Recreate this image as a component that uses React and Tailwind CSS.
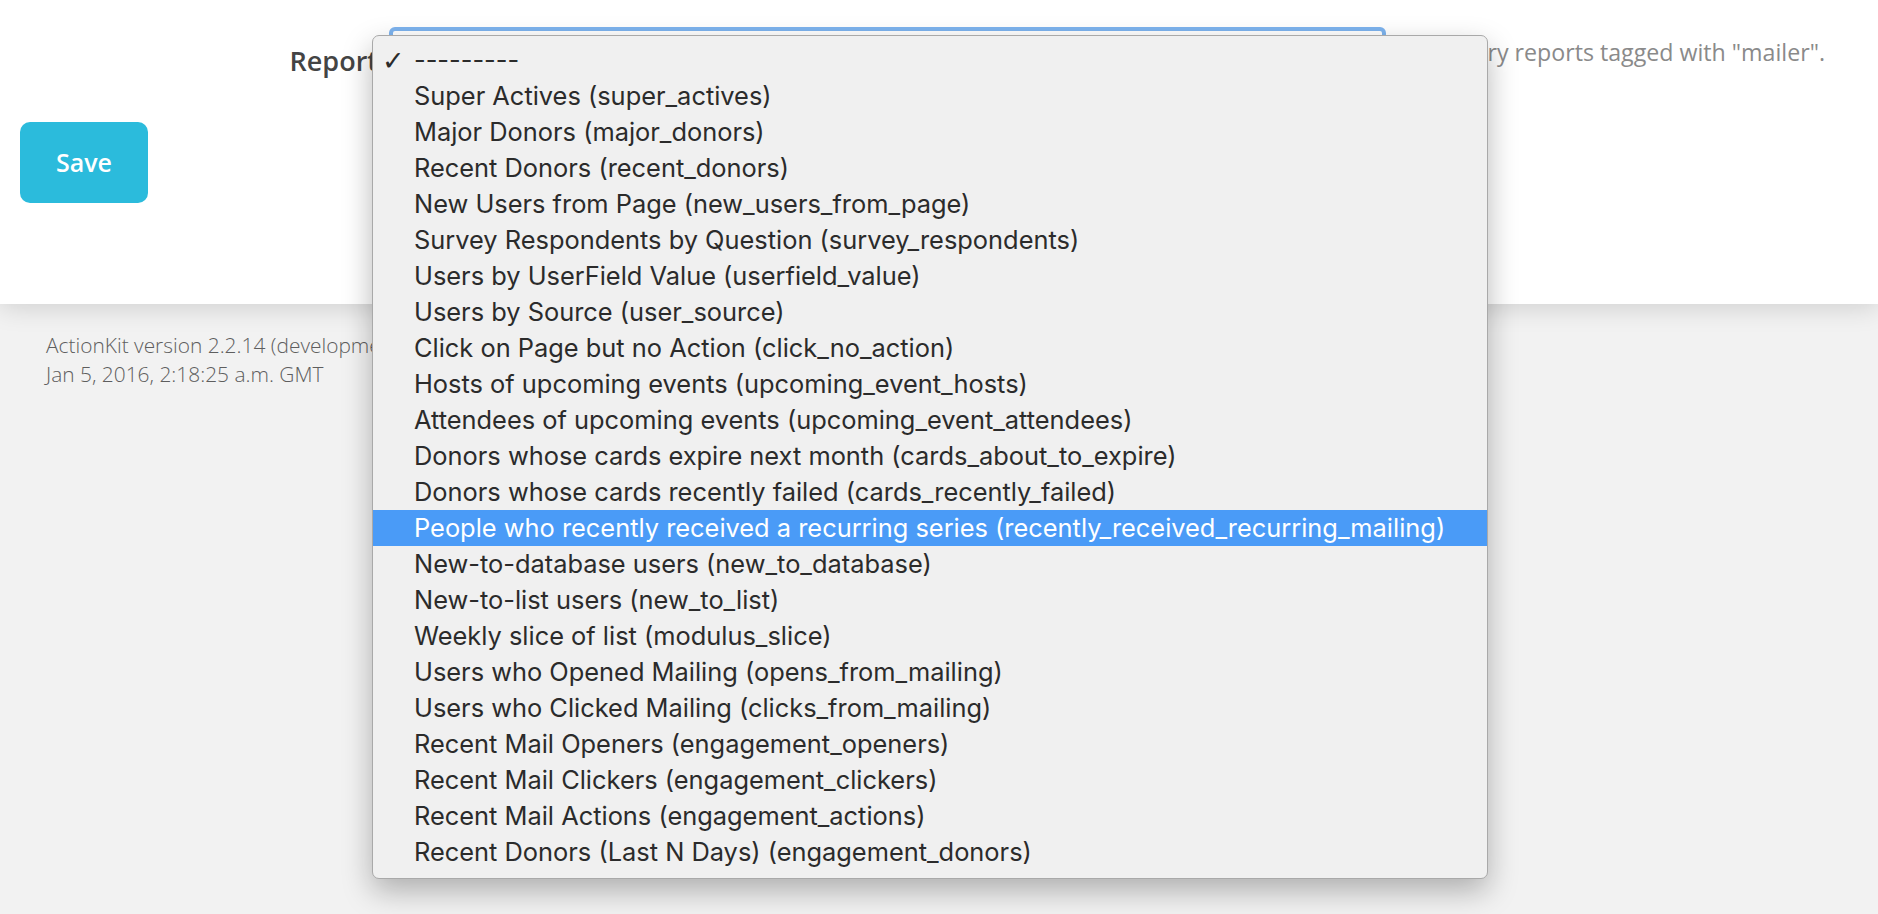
import React from 'react';

const reports = [
  '---------',
  'Super Actives (super_actives)',
  'Major Donors (major_donors)',
  'Recent Donors (recent_donors)',
  'New Users from Page (new_users_from_page)',
  'Survey Respondents by Question (survey_respondents)',
  'Users by UserField Value (userfield_value)',
  'Users by Source (user_source)',
  'Click on Page but no Action (click_no_action)',
  'Hosts of upcoming events (upcoming_event_hosts)',
  'Attendees of upcoming events (upcoming_event_attendees)',
  'Donors whose cards expire next month (cards_about_to_expire)',
  'Donors whose cards recently failed (cards_recently_failed)',
  'People who recently received a recurring series (recently_received_recurring_mailing)',
  'New-to-database users (new_to_database)',
  'New-to-list users (new_to_list)',
  'Weekly slice of list (modulus_slice)',
  'Users who Opened Mailing (opens_from_mailing)',
  'Users who Clicked Mailing (clicks_from_mailing)',
  'Recent Mail Openers (engagement_openers)',
  'Recent Mail Clickers (engagement_clickers)',
  'Recent Mail Actions (engagement_actions)',
  'Recent Donors (Last N Days) (engagement_donors)',
];

const ReportMenu = () => {
  return (
    <div className="absolute left-[372px] top-[35px] z-20 w-[1116px] rounded-[7px] border border-[#a9a9a9] bg-[#f0f0f0] pb-[8px] pt-[6px] shadow-[0_12px_30px_rgba(0,0,0,0.28)] font-['Inter',sans-serif] text-[25.4px] text-[#2b2b2b]">
      {reports.map((label, i) => {
        const active = i === 13;
        return (
          <div
            key={label}
            className={
              active
                ? 'flex h-[36px] items-center bg-[#4a9bf7] text-white'
                : 'flex h-[36px] items-center'
            }
          >
            <span className="w-[41px] shrink-0 pl-[9px] font-['DejaVu_Sans',sans-serif] text-[27px] font-bold leading-none">
              {i === 0 ? '✓' : ''}
            </span>
            <span className="whitespace-nowrap">{label}</span>
          </div>
        );
      })}
    </div>
  );
};

export default function App() {
  return (
    <div className="relative min-h-screen bg-[#f2f2f2] font-['Open_Sans',sans-serif]">
      <div className="relative z-10 h-[304px] bg-white shadow-[0_2px_26px_rgba(0,0,0,0.16)]">
        <div className="flex items-start pt-[27px]">
          <label className="mt-[14px] w-[378px] shrink-0 text-right text-[27px] font-semibold text-[#444]">
            Report
          </label>
          <div className="ml-[11px] h-[72px] w-[997px] shrink-0 rounded-[6px] border-[4px] border-[#7db3ee] bg-white" />
          <p className="ml-auto mt-[8px] whitespace-nowrap pr-[53px] text-[23.2px] text-[#8a8a8a]">
            Library reports tagged with "mailer".
          </p>
        </div>
        <button className="ml-[20px] mt-[23px] h-[81px] w-[128px] rounded-[10px] bg-[#2bbbdc] text-[25px] font-semibold text-white">
          Save
        </button>
      </div>

      <div className="pl-[46px] pt-[27px] text-[20.9px] font-light leading-[29px] text-[#5e5e5e]">
        <div>ActionKit version 2.2.14 (development)</div>
        <div>Jan 5, 2016, 2:18:25 a.m. GMT</div>
      </div>

      <ReportMenu />
    </div>
  );
}
